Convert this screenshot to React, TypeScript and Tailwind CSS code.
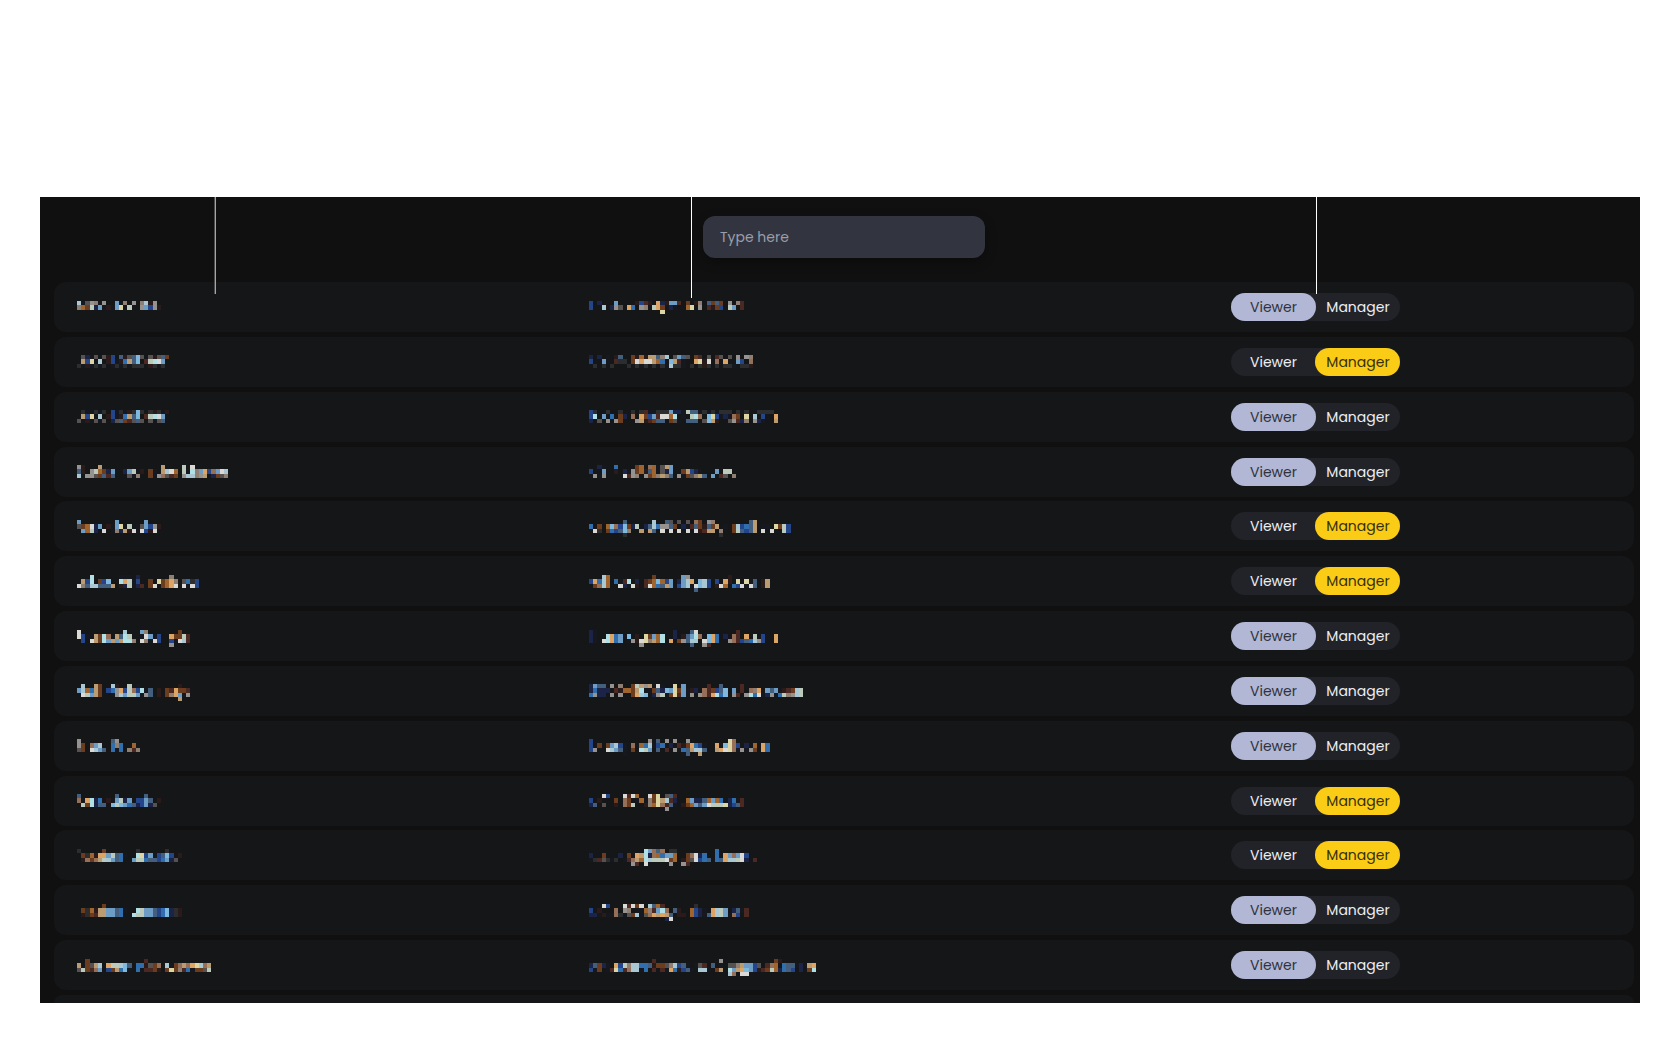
import { useState } from "react";

type Role = "viewer" | "manager";
type Member = { role: Role; name: string[]; email: string[] };

const palette: Record<string, string> = {
  a: "#a9c8d4", b: "#8e7f72", w: "#dad9d6", g: "#95928f", m: "#57524f", d: "#2b2d2e",
  k: "#16181f", n: "#1b2346", r: "#2a1a1a", R: "#4c2822", o: "#dca565", O: "#a0652f",
  t: "#bb9c72", y: "#ddd6a2", s: "#6b3c1e", u: "#306eae", U: "#24458a", l: "#80b9de",
  c: "#b0dfe6", v: "#435f7d", e: "#6d9cc4", f: "#bbcabb", q: "#966f58",
};

// Each string is one line of mosaic cells; a dot is an empty cell.
const members: Member[] = [
  {
    role: "viewer",
    name: ["akmgbkg..ekb.g.barg", "bOsfnekrkey.f..geUgr"],
    email: ["U.n...e....rURr.onreeR.s.rb.vsvs.g.bR", "U..a.ngm.ou.gb.fosknk..Oy.g.RrsU.fe.R", ".................y"],
  },
  {
    role: "manager",
    name: [".mnkmkmrU.vrmvlm.mrmvs", ".tUy.a.rUkrutvl.Rfcwe", "dkrkdkd.kdkdkddd.rdkd"],
    email: ["n.n.k.rv..srOrttvba.mevm.sR.m.Rm.m.g.gb", "U..ek.Rdd.swowwtOu.ltRk..oyrw.q.o..eU.q", ".d.d.d...d.dkd.dkdkaddk.d.drd.d.ddk.ddr"],
  },
  {
    role: "viewer",
    name: [".dkkdkd.Ukdkrdld.drdkr", ".tUy.a.rUkrutvl.Rfcwe", "mkrkmkm.nmvsRmvm.mkmv"],
    email: ["Ud..d..d..d.dRkkdddennkfvvkdkdkddd.dkd..dddd", "Uc.e.u.sn.q.osUeRwwOc.k.fcq.lyUknkqs.y.a.U..o", "n.m.g.gs...gtrRsvv.smk.vvv.mltr..mgRnb.gnk..t"],
  },
  {
    role: "viewer",
    name: ["gr...t..............t....f.w", "vr.gfOsne..nefkr.sk.tawO.fkcbeoUqewa", "a.ggmsvRv...mkb..skgqmRs.gaabgtknsmb"],
    email: ["..nk..u....sO.qOkmte", "U..e..r.nkgsOrvOkmne..stUnk...e.ff", ".gkg....wRgb.gsObtbv.gksmbtv.e.Rm.b"],
  },
  {
    role: "manager",
    name: ["e........e......e", "msOwne.rkey.f.kmeUgr", ".eOfn.w.kbntrwkwUrw"],
    email: ["........v......a..vmkm.m.qs.gb........vt", "u.s.OlqUlsnf.nvauggvs.nkRvsrvst.k.saUuvt.kk.ysfU", ".wd.suUvlb..t.tv.w.w.w.w.wrRtt.b..sfvUvt.w.wk.fU", "........d......................d"],
  },
  {
    role: "manager",
    name: ["...c......kkk.n.......b", ".tUc.sUl..cofkU..s.ysOob.mudU", "wbvaavvvt.rnfknR.sw.sOow.wkwU"],
    email: ["...aO..........s......eg.........r", "UouaO.ukRc.n.RsOlOUe.neaoklaU.U.or.y.ykv.rt", ".sqaO..wnkwr.RwOuvte.UeakwlaU.rwO.uUwkwv.rt", ".........................vk"],
  },
  {
    role: "viewer",
    name: ["w..........a...eb.......s", "wUk.tscq.tvcf..kwekU..ossfR", ".U.wtscetetccb.wbkwU..UkwaR", "......................g"],
    email: ["nk..................n...vw.........R", "nk..couekl.r.yseOc..n.rvecq.lou.n.qR.o.f.U..o", "nk.wcoue.kgrwybtOc.o.sgvaa.wlou..gqRUvuagU..o", "............g...........v..gR"],
  },
  {
    role: "viewer",
    name: [".a..ts..ar..f.k.........r", "eaOuts.UugoUfqUckv.r.sRossR", ".wfets..kgaeffekgv.r.sboekg", "........................t"],
    email: ["nevv.g.b..sftgt.wk..y.e.....R..v....R", "nunnn.RrOOstckksvnleysekrn.qRsUvl.e.R.qbo.evekrRsaf", "ugnn.g.g..soal.ngfksyRekg.gqRocul.gR.gcuwkngkufbgaf"],
  },
  {
    role: "viewer",
    name: ["g.......vg", "gs.qea..ubu..O", "ms.waev.uku.bRb"],
    email: ["U.............g.v.g.g..g.........yq", "U.s.seaUk.qkOuakUukn.RrsouUk..oklyqU.n.O.ou", "Ug..waevk.s.cfe.v.R.gkuvtaav..towyqkgkgs.ou", "........k.............kv..t"],
  },
  {
    role: "manager",
    name: ["v........v......v", "qkocnu.rkefne.UUev.r", ".fscnvv.lfleuvnUenm"],
    email: ["...wU...wRwO..wsy.mvR", "U.r...s.qs.kOkbsytaRn..OennvOeOu.nukR", "nv.m..r.qsf..rbOyqRvk.rsOevewfffynUvR", "..................g"],
  },
  {
    role: "manager",
    name: ["d.....s.......d......d", ".sdOrooefvuk..cyUekUvlU.r", ".rqsqtfaevu..effuvvUuenm"],
    email: [".............ceqvq.dd.........u", "n..s...n.s.otcnqOueeO..sqwnu..u.oeqewU", "kdRmdkd.kRqtOcafffwsO.rsmwUuv.uvoaafwn.R", "..........gR.w.....g..gR"],
  },
  {
    role: "viewer",
    name: ["......s", ".sdOrtteevuk..cfeevUulndr", ".rdsRtteevu..cffeevUulndr"],
    email: ["...wU...wRwsw.avOR.......d", "U.r...q.gb.kkObRecq.vr..OUnk.oafe.nvkR", "nnkrkkqdkmsakmqototv.rr.OUnkvoafekqU.R", "..................nw"],
  },
  {
    role: "viewer",
    name: ["..s.............R", "tksmta.offalv.uurmsq.aksqtqoyaqt", "mfsRqe.Ustulk.ukRRsr.sysbRukssmf"],
    email: ["...............R...............g............sr", "nvsnk.oUfbaauuvrssmbaUvk.kmR.v.k.mmbteeUm.RqO.uvvkn.to", "Uks.kRyuRqaaku.R.RkourUvk.aak.st.cetoleUrRsfOnuvU.n.sc", ".................................aq.ww"],
  },
];

function Mosaic({ lines, label }: { lines: string[]; label: string }) {
  return (
    <svg
      role="img"
      aria-label={label}
      className="mt-1 h-[17px] w-[252px]"
      viewBox="0 0 60 4"
      preserveAspectRatio="none"
      shapeRendering="crispEdges"
    >
      {lines.map((line, y) =>
        line.split("").map((cell, x) =>
          cell === "." ? null : <rect key={`${x}-${y}`} x={x} y={y} width="1" height="1" fill={palette[cell]} />,
        ),
      )}
    </svg>
  );
}

function RoleSwitch({ initial }: { initial: Role }) {
  const [role, setRole] = useState<Role>(initial);
  return (
    <div role="group" aria-label="Role" className="flex h-7 rounded-[14px] bg-[#222329]">
      <button
        type="button"
        aria-pressed={role === "viewer"}
        onClick={() => setRole("viewer")}
        className={`w-[85px] rounded-[14px] text-center ${role === "viewer" ? "bg-[#b1b7d5] text-[#30323c]" : "text-[#eceef2]"}`}
      >
        Viewer
      </button>
      <button
        type="button"
        aria-pressed={role === "manager"}
        onClick={() => setRole("manager")}
        className={`-ml-px w-[85px] rounded-[14px] pl-px text-center ${role === "manager" ? "bg-[#facc15] text-[#35300f]" : "text-[#eceef2]"}`}
      >
        Manager
      </button>
    </div>
  );
}

export default function App() {
  return (
    <div className="flex min-h-screen flex-col bg-white px-10 pt-[197px] pb-10 font-['Poppins','Inter',sans-serif] text-sm/7">
      <main className="relative flex flex-1 flex-col overflow-hidden bg-[#101010] pt-[19px] pr-[6px] pl-[14px]">
        <div className="absolute top-0 left-[174px] h-[97px] w-[2px] border-l border-[#4b4b4c] bg-[#a5a5a6]" />
        <div className="absolute top-0 left-[651px] h-[101px] w-px bg-white" />
        <div className="absolute top-0 left-[1276px] h-[97px] w-px bg-white" />

        <input
          type="text"
          aria-label="Search"
          placeholder="Type here"
          className="mb-6 h-[42px] w-[282px] shrink-0 self-center rounded-xl bg-[#32353f] px-[17px] text-gray-200 shadow-[0_4px_12px_rgba(0,0,0,0.3)] outline-none placeholder:text-[#9a9eaa]"
        />

        <ul className="flex flex-1 flex-col justify-between">
          {members.map((member, i) => (
            <li
              key={i}
              className="grid h-[50px] grid-cols-[512fr_642fr_381fr] items-center rounded-xl bg-[#151618] pr-[22px] pl-[23px]"
            >
              <Mosaic lines={member.name} label="Hidden name" />
              <Mosaic lines={member.email} label="Hidden email" />
              <div className="flex">
                <RoleSwitch initial={member.role} />
              </div>
            </li>
          ))}
          <li aria-hidden="true" className="h-2 rounded-t-xl bg-[#151618]" />
        </ul>
      </main>
    </div>
  );
}
